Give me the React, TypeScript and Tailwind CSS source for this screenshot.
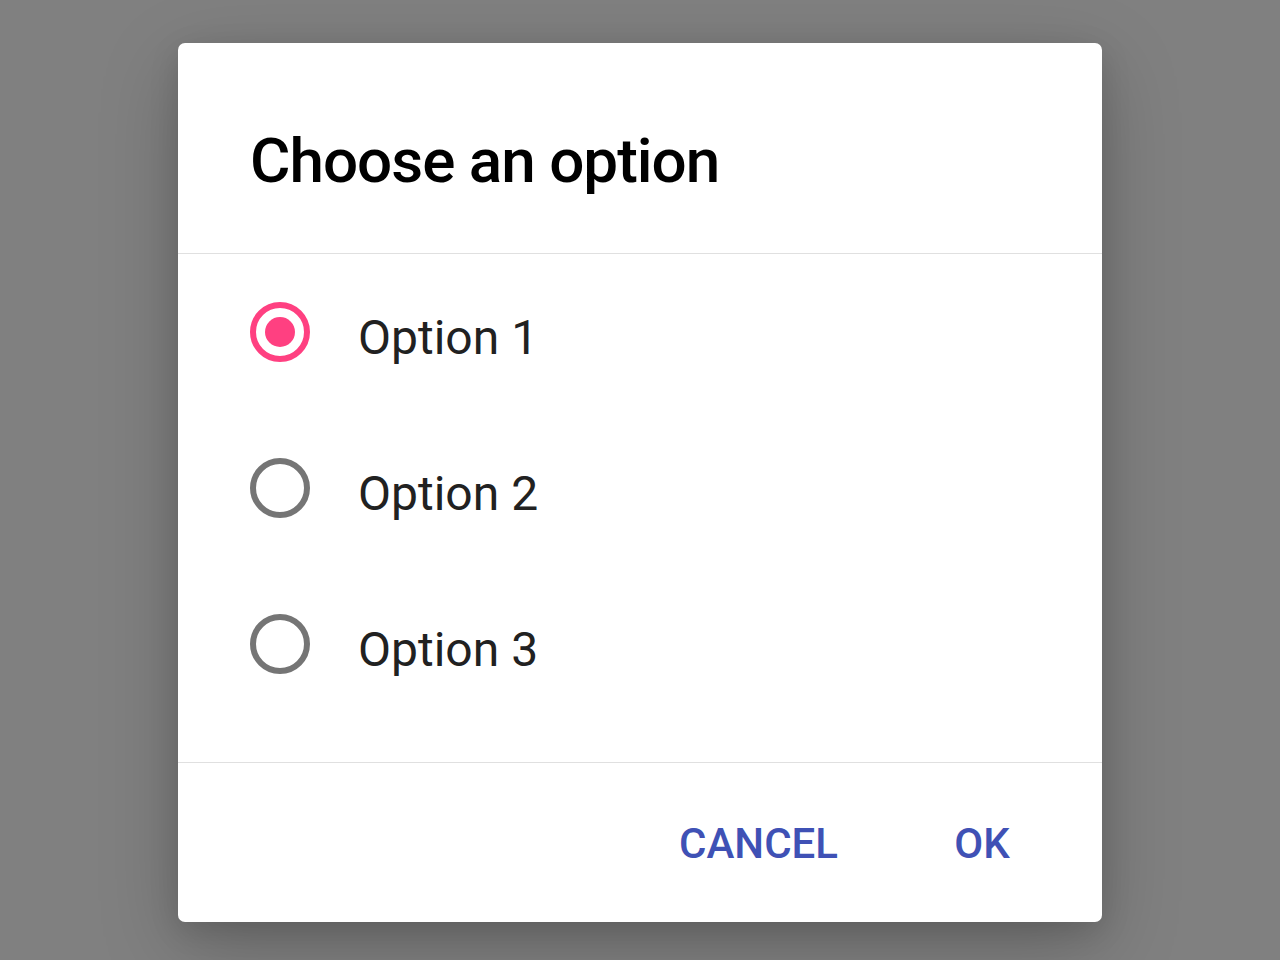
import React, { useState } from 'react';

const options = ['Option 1', 'Option 2', 'Option 3'];

const Radio: React.FC<{ checked: boolean }> = ({ checked }) => (
  <div
    className={`flex h-[60px] w-[60px] shrink-0 items-center justify-center rounded-full border-[6px] ${
      checked ? 'border-[#ff4081]' : 'border-[#757575]'
    }`}
  >
    {checked && <div className="h-[30px] w-[30px] rounded-full bg-[#ff4081]"></div>}
  </div>
);

export default function App() {
  const [selected, setSelected] = useState(0);
  return (
    <div
      className="flex h-[960px] w-full justify-center bg-[#808080] pt-[43px]"
      style={{ fontFamily: 'Roboto, "Liberation Sans", sans-serif' }}
    >
      <div className="flex h-[879px] w-[924px] flex-col rounded-[7px] bg-white shadow-[0_24px_80px_rgba(0,0,0,0.22),0_8px_30px_rgba(0,0,0,0.12)]">
        <div className="h-[211px] shrink-0 border-b border-[#e0e0e0] pl-[72px] pt-[86px]">
          <h1 className="text-[62px] font-medium leading-[64px] tracking-[-1px] text-black">Choose an option</h1>
        </div>
        <div className="flex shrink-0 flex-col pb-[40px]">
          {options.map((o, i) => (
            <div
              key={o}
              onClick={() => setSelected(i)}
              className="flex h-[156px] cursor-pointer items-center pl-[72px]"
            >
              <Radio checked={selected === i} />
              <span className="ml-[48px] pt-[12px] text-[48px] leading-[48px] text-[#212121]">{o}</span>
            </div>
          ))}
        </div>
        <div className="flex flex-1 items-center justify-end gap-[24px] border-t border-[#e0e0e0] pr-[24px] pt-[2px]">
          <button className="h-[108px] min-w-[192px] px-[24px] text-[42px] font-medium text-[#3f51b5]">CANCEL</button>
          <button className="h-[108px] min-w-[192px] px-[24px] text-[42px] font-medium text-[#3f51b5]">OK</button>
        </div>
      </div>
    </div>
  );
}
